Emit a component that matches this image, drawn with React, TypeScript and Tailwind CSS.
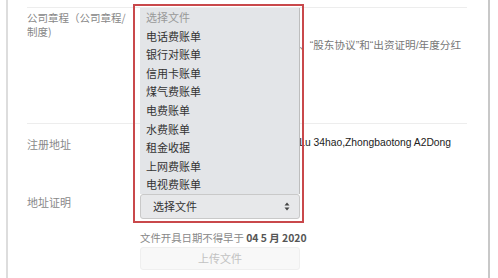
import React from 'react';

const cjk = "font-['Noto_Sans_CJK_SC','Microsoft_YaHei',sans-serif]";

const options = [
  '电话费账单',
  '银行对账单',
  '信用卡账单',
  '煤气费账单',
  '电费账单',
  '水费账单',
  '租金收据',
  '上网费账单',
  '电视费账单',
];

function SortArrows() {
  return (
    <svg width="6" height="9" viewBox="0 0 6 9" className="fill-[#444]">
      <path d="M3 0.5 L5.5 3.5 L0.5 3.5 Z" />
      <path d="M3 8.5 L5.5 5.5 L0.5 5.5 Z" />
    </svg>
  );
}

export default function App() {
  return (
    <div className={`relative w-[498px] h-[278px] bg-white overflow-hidden ${cjk}`}>
      <div className="ml-[6px] w-[484px] h-full border-l-2 border-l-[#dddddd] border-r-2 border-r-[#c8c8c8] pt-[7px] pl-[19px] pr-[21px]">
        {/* 公司章程 */}
        <div className="flex h-[116px] border-t border-[#ededed]">
          <div className="w-[113px] shrink-0 pt-[3px] text-[10.5px] leading-[14px] text-[#888]">
            公司章程（公司章程/
            <br />
            制度)
          </div>
          <div className="flex-1 flex justify-end pr-[6px] pt-[30px] font-['Liberation_Sans','Noto_Sans_CJK_SC',sans-serif] text-[10.6px] leading-[14px] text-[#777] whitespace-nowrap">
            、“股东协议”和“出资证明/年度分红
          </div>
        </div>

        {/* 注册地址 */}
        <div className="flex h-[60px] border-t border-[#ededed]">
          <div className="w-[113px] shrink-0 pt-[13px] text-[11px] leading-[14px] text-[#888]">注册地址</div>
          <div className="flex-1 flex justify-end overflow-hidden pr-[16px] pt-[12px] whitespace-nowrap font-['Liberation_Sans',sans-serif] text-[10.3px] leading-[14px] text-[#222]">
            Lu 34hao,Zhongbaotong A2Dong
          </div>
        </div>

        {/* 地址证明 */}
        <div className="flex">
          <div className="w-[113px] shrink-0 pt-[12px] text-[11px] leading-[14px] text-[#888]">地址证明</div>
          <div className="w-[160px] pt-[11px]">
            <div className="h-[25px] flex items-center justify-between pl-[12px] pr-[9px] bg-[#e7e8ea] border border-[#c9c9c9] rounded-[3px] text-[11px] text-[#333]">
              <span>选择文件</span>
              <SortArrows />
            </div>
            <div className="mt-[12px] text-[10.4px] leading-[14px] text-[#888] whitespace-nowrap">
              文件开具日期不得早于 <span className="font-bold text-[#555]">04 5 月 2020</span>
            </div>
            <div className="mt-[2px] h-[23px] flex items-center justify-center bg-[#f8f8f8] border border-[#efefef] rounded-[3px] text-[11px] text-[#c2c2c2]">
              上传文件
            </div>
          </div>
        </div>
      </div>

      {/* open dropdown list */}
      <div className="absolute left-[140px] top-[8px] w-[160px] h-[186px] bg-[#e3e5e8] border-r border-[#bdbdbd]">
        <div className="h-[18.6px] leading-[18.6px] pl-[6px] text-[11px] text-[#999]">选择文件</div>
        {options.map((o) => (
          <div key={o} className="h-[18.6px] leading-[18.6px] pl-[6px] text-[11px] text-[#333]">
            {o}
          </div>
        ))}
      </div>

      {/* red annotation frame */}
      <div className="absolute left-[133px] top-[4px] w-[171px] h-[219px] border-2 border-[#c9484b] pointer-events-none" />
    </div>
  );
}
